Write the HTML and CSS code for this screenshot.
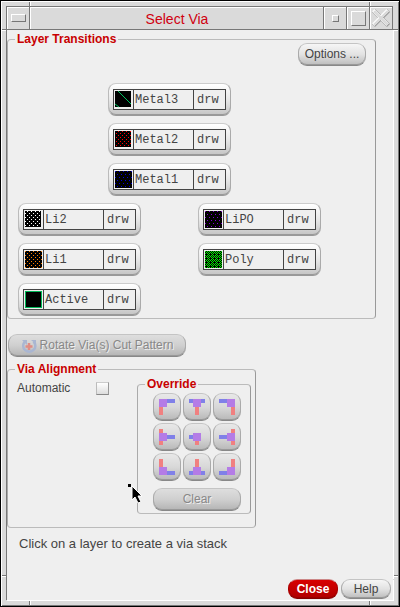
FILE: index.html
```html
<!DOCTYPE html>
<html lang="en">
<head>
<meta charset="utf-8">
<title>Select Via</title>
<link rel="stylesheet" href="styles.css">
</head>
<body>
<svg class="defs" aria-hidden="true">
  <defs>
    <pattern id="dots-red" width="4" height="4" patternUnits="userSpaceOnUse"><rect width="4" height="4" fill="#000"/><path fill="#ff0000" d="M3 0h1v1h-1zM1 2h1v1h-1z"/></pattern>
    <pattern id="dots-blue" width="4" height="6" patternUnits="userSpaceOnUse"><rect width="4" height="6" fill="#000"/><path fill="#0000e0" d="M0 0h1v1h-1zM2 3h1v1h-1z"/></pattern>
    <pattern id="dots-white" width="4" height="4" patternUnits="userSpaceOnUse"><rect width="4" height="4" fill="#000"/><path fill="#fff" d="M2 0h1v1h-1zM0 2h1v1h-1z"/></pattern>
    <pattern id="dots-orange" width="4" height="4" patternUnits="userSpaceOnUse"><rect width="4" height="4" fill="#000"/><path fill="#ff8000" d="M0 0h1v1h-1zM2 2h1v1h-1z"/></pattern>
    <pattern id="dots-purple" width="4" height="6" patternUnits="userSpaceOnUse"><rect width="4" height="6" fill="#000"/><path fill="#8000d0" d="M0 0h1v1h-1zM2 3h1v1h-1z"/></pattern>
    <pattern id="mesh-green" width="4" height="4" patternUnits="userSpaceOnUse"><rect width="4" height="4" fill="#000"/><path fill="#00f000" d="M0 0h1v1h-1zM2 0h1v1h-1zM1 1h1v1h-1zM3 1h1v1h-1zM0 2h1v1h-1zM2 2h1v1h-1zM3 3h1v1h-1z"/></pattern>
  </defs>
</svg>
<div class="window">
  <header class="titlebar">
    <button class="wm" aria-label="Window menu"><span class="bevel bar"></span></button>
    <h1>Select Via</h1>
    <button class="wm" aria-label="Minimize"><span class="bevel dot"></span></button>
    <button class="wm" aria-label="Maximize"><span class="bevel box"></span></button>
    <button class="wm" aria-label="Close window"><svg width="18" height="18" viewBox="0 0 18 18"><path d="M3 3l12 12M15 3L3 15" stroke="#777" stroke-width="4" stroke-linecap="square"/><path d="M2.500 2.500l12 12M14.500 2.500L2.500 14.500" stroke="#fff" stroke-width="3.500" stroke-linecap="square"/><path d="M3 3l12 12M15 3L3 15" stroke="#dadada" stroke-width="2.500" stroke-linecap="square"/></svg></button>
  </header>
  <main>
    <fieldset class="group transitions">
      <legend>Layer Transitions</legend>
      <button class="btn options">Options ...</button>
      <div class="layers">
        <button class="layer metal"><span class="cells"><svg width="17" height="17"><rect width="16" height="16"/><path d="M3 0l13 13M0 13l4 3" stroke="#00c060" fill="none"/></svg><span class="name">Metal3</span><span class="use">drw</span></span></button>
        <button class="layer metal"><span class="cells"><svg width="17" height="17"><rect width="16" height="16" fill="url(#dots-red)"/></svg><span class="name">Metal2</span><span class="use">drw</span></span></button>
        <button class="layer metal"><span class="cells"><svg width="17" height="17"><rect width="17" height="17" fill="url(#dots-blue)"/></svg><span class="name">Metal1</span><span class="use">drw</span></span></button>
        <button class="layer"><span class="cells"><svg width="17" height="17"><rect width="16" height="16" fill="url(#dots-white)"/></svg><span class="name">Li2</span><span class="use">drw</span></span></button>
        <button class="layer"><span class="cells"><svg width="17" height="17"><rect width="17" height="17" fill="url(#dots-purple)"/></svg><span class="name">LiPO</span><span class="use">drw</span></span></button>
        <button class="layer"><span class="cells"><svg width="17" height="17"><rect width="17" height="17" fill="url(#dots-orange)"/></svg><span class="name">Li1</span><span class="use">drw</span></span></button>
        <button class="layer"><span class="cells"><svg width="17" height="17"><rect width="17" height="17" fill="url(#mesh-green)"/></svg><span class="name">Poly</span><span class="use">drw</span></span></button>
        <button class="layer"><span class="cells"><svg width="17" height="17"><rect x=".5" y=".5" width="16" height="16" stroke="#00b858"/></svg><span class="name">Active</span><span class="use">drw</span></span></button>
      </div>
    </fieldset>
    <button class="btn disabled rotate" disabled><svg width="16" height="14" viewBox="0 0 16 14"><path d="M4.500 2.500C1.500 4 1.500 9 4 11s6 2 8.500 0 2.500-6 0-8.500" fill="none" stroke="#a9b6d2" stroke-width="2.500"/><path d="M1 1h5v5zM10 1h5v4z" fill="#a9b6d2"/><path d="M8 4v7M4.500 7.500h7" stroke="#e08c84" stroke-width="2.500"/></svg>Rotate Via(s) Cut Pattern</button>
    <fieldset class="group alignment">
      <legend>Via Alignment</legend>
      <label class="auto">Automatic <input type="checkbox"></label>
      <fieldset class="group override">
        <legend>Override</legend>
        <div class="pad">
          <button class="btn" aria-label="Top left"><svg width="16" height="16"><path class="b" d="M8 0h8v4h-8z"/><path class="r" d="M0 8h4v8h-4z"/><path class="p" d="M0 0h8v8h-8z"/></svg></button>
          <button class="btn" aria-label="Top"><svg width="16" height="16"><path class="b" d="M0 0h16v4h-16z"/><path class="r" d="M6 8h4v8h-4z"/><path class="p" d="M4 0h8v8h-8z"/></svg></button>
          <button class="btn" aria-label="Top right"><svg width="16" height="16"><path class="b" d="M0 0h8v4h-8z"/><path class="r" d="M12 8h4v8h-4z"/><path class="p" d="M8 0h8v8h-8z"/></svg></button>
          <button class="btn" aria-label="Left"><svg width="16" height="16"><path class="b" d="M8 6h8v4h-8z"/><path class="r" d="M0 0h4v16h-4z"/><path class="p" d="M0 4h8v8h-8z"/></svg></button>
          <button class="btn" aria-label="Center"><svg width="16" height="16"><path class="b" d="M0 6h4v4h-4z"/><path class="r" d="M6 12h4v4h-4z"/><path class="p" d="M4 4h8v8h-8z"/></svg></button>
          <button class="btn" aria-label="Right"><svg width="16" height="16"><path class="b" d="M0 6h8v4h-8z"/><path class="r" d="M12 0h4v16h-4z"/><path class="p" d="M8 4h8v8h-8z"/></svg></button>
          <button class="btn" aria-label="Bottom left"><svg width="16" height="16"><path class="b" d="M8 12h8v4h-8z"/><path class="r" d="M0 0h4v8h-4z"/><path class="p" d="M0 8h8v8h-8z"/></svg></button>
          <button class="btn" aria-label="Bottom"><svg width="16" height="16"><path class="b" d="M0 12h16v4h-16z"/><path class="r" d="M6 0h4v8h-4z"/><path class="p" d="M4 8h8v8h-8z"/></svg></button>
          <button class="btn" aria-label="Bottom right"><svg width="16" height="16"><path class="b" d="M0 12h8v4h-8z"/><path class="r" d="M12 0h4v8h-4z"/><path class="p" d="M8 8h8v8h-8z"/></svg></button>
        </div>
        <button class="btn disabled clear" disabled>Clear</button>
      </fieldset>
      <svg class="pointer" width="16" height="20" viewBox="0 0 16 20" aria-hidden="true"><path d="M0 0h3v3h-3z"/><path d="M4 2v14l3-3 3 6 3-1-3-6h4z" stroke="#fff"/></svg>
    </fieldset>
    <p class="hint">Click on a layer to create a via stack</p>
  </main>
  <footer>
    <button class="btn primary">Close</button>
    <button class="btn">Help</button>
  </footer>
</div>
</body>
</html>
```
FILE: styles.css
```css
* {
  box-sizing: border-box;
}

body {
  margin: 0;
  background: #000;
  color: #444;
  font: 12px/15px "Liberation Sans", Arial, sans-serif;
}

button,
input {
  margin: 0;
  font: inherit;
  color: inherit;
}

svg {
  display: block;
  flex: none;
}

.defs {
  position: absolute;
  width: 0;
  height: 0;
}

/* Window frame with its eight resize notches */
.window {
  --tick: #777 0 1px, #fff 1px 2px;
  display: flex;
  flex-direction: column;
  min-height: 100vh;
  padding: 5px 6px 6px 5px;
  border: 1px solid #000;
  background:
    linear-gradient(90deg, var(--tick)) left 28px top 0 / 2px 100% no-repeat,
    linear-gradient(90deg, var(--tick)) right 28px top 0 / 2px 100% no-repeat,
    linear-gradient(var(--tick)) left 0 top 28px / 100% 2px no-repeat,
    linear-gradient(var(--tick)) left 0 bottom 29px / 100% 2px no-repeat,
    #dadada;
  box-shadow: inset 1px 1px #fff, inset -1px -1px #777;
}

.titlebar {
  display: flex;
  height: 24px;
  border: 1px solid #777;
  background: #dadada;
}

.titlebar h1 {
  flex: 1;
  margin: 0;
  border: solid #fff;
  border-width: 1px 0 0 1px;
  color: #d00010;
  font-size: 14px;
  font-weight: normal;
  line-height: 23px;
  text-align: center;
}

.wm {
  display: flex;
  align-items: center;
  justify-content: center;
  width: 23px;
  padding: 0;
  border: solid #777;
  border-width: 0 0 0 1px;
  background: #dadada;
  box-shadow: inset 1px 1px #fff;
}

.wm:first-child {
  border-width: 0 1px 0 0;
}

.bevel {
  border: 1px solid;
  border-color: #fff #777 #777 #fff;
}

.bar {
  width: 15px;
  height: 8px;
}

.dot {
  width: 7px;
  height: 7px;
}

.box {
  width: 15px;
  height: 15px;
}

main {
  flex: 1;
  padding: 2px 17px 0 0;
  border-left: 1px solid #777;
  background: #efefef;
  box-shadow: 1px 0 #fff;
}

.group {
  min-width: 0;
  margin: 0;
  padding: 0 9px 0 7px;
  border: 1px solid;
  border-color: #bbb #999 #bbb #aaa;
  border-radius: 4px;
}

legend {
  padding: 0 2px;
  color: #c80000;
  font-weight: bold;
  line-height: 15px;
}

.transitions {
  padding-bottom: 2px;
}

.btn {
  display: flex;
  align-items: center;
  justify-content: center;
  height: 23px;
  padding: 0 4px;
  border: 1px solid;
  border-color: #c4c4c4 #aaa #888 #aaa;
  border-radius: 9px;
  background: linear-gradient(#f6f6f6, #e2e2e2 50%, #bcbcbc);
  box-shadow: inset 0 -1px #999;
  white-space: nowrap;
}

.options {
  width: 68px;
  margin: -4px 0 17px auto;
}

.layers {
  display: grid;
  grid-template-columns: auto auto;
  justify-content: space-between;
  width: 303px;
  margin-left: 3px;
  row-gap: 7px;
}

.layer {
  width: 123px;
  height: 33px;
  padding: 4px;
  border: 1px solid;
  border-color: #ccc #aaa #999 #bbb;
  border-radius: 8px;
  background: linear-gradient(#fff, #e8e8e8 50%, #c4c4c4);
  box-shadow: inset 0 -1px #999;
}

.metal {
  grid-column: 1 / -1;
  justify-self: center;
}

.cells {
  display: grid;
  grid-template-columns: 19px 60px 1fr;
  align-items: center;
  height: 21px;
  border: 1px solid #444;
  background: #efefef;
  font: 12px/17px "Liberation Mono", "Courier New", monospace;
  text-align: left;
}

.cells svg {
  margin: 0 1px;
}

.name,
.use {
  padding: 2px 0 0 1px;
  border-left: 1px solid #444;
}

.use {
  padding-left: 3px;
}

.disabled {
  border-color: #c4c4c4 #aaa #888 #aaa;
  background: linear-gradient(#dedede, #cfcfcf 50%, #b4b4b4);
  color: #888;
  text-shadow: 1px 1px #eee;
}

.rotate {
  gap: 3px;
  width: 178px;
  margin: 15px 0 5px 1px;
}

.alignment {
  position: relative;
  display: grid;
  grid-template-columns: 1fr auto;
  align-items: start;
  width: 249px;
  padding-right: 4px;
  padding-bottom: 13px;
}

.auto {
  display: flex;
  align-items: center;
  gap: 26px;
  padding: 4px 2px;
}

.auto input {
  appearance: none;
  width: 13px;
  height: 13px;
  border: 1px solid;
  border-color: #ccc #999 #888 #bbb;
  background: linear-gradient(#fff, #ddd);
}

.override {
  width: 114px;
  padding: 0 9px 2px 7px;
}

.pad {
  display: grid;
  grid-template-columns: repeat(3, 28px);
  gap: 2px;
  margin: 1px 0 7px 8px;
}

.pad .btn {
  width: 28px;
  height: 28px;
  padding: 0;
  background: linear-gradient(#e8e8e8, #d8d8d8 50%, #b8b8b8);
}

.b {
  fill: #8080e8;
}

.r {
  fill: #f08080;
}

.p {
  fill: #b47ce6;
}

.clear {
  width: 88px;
  margin-left: 8px;
}

.pointer {
  position: absolute;
  left: 120px;
  top: 107px;
}

.hint {
  margin: 8px 0 0 12px;
  font-size: 13px;
}

footer {
  display: flex;
  justify-content: flex-end;
  gap: 3px;
  padding: 0 2px 1px 0;
  border-left: 1px solid #777;
  background: #efefef;
  box-shadow: 1px 1px #fff;
}

footer .btn {
  width: 50px;
  height: 20px;
}

.primary {
  border-color: #c88 #a00 #800 #a00;
  background: linear-gradient(#d80000, #b00000);
  box-shadow: inset 0 -1px #900;
  color: #fff;
  font-weight: bold;
}
```
